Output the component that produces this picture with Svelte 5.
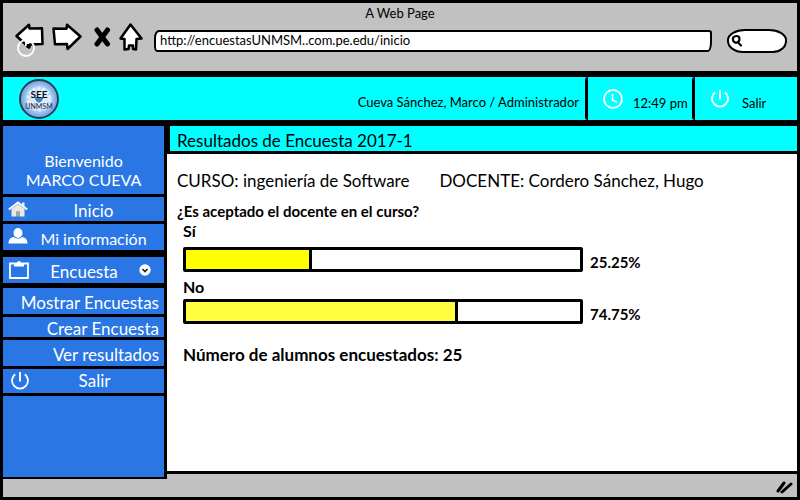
<script>
  const results = [
    { label: 'Sí', value: '25.25%', width: 32, color: '#ffff00' },
    { label: 'No', value: '74.75%', width: 69, color: '#ffff40' }
  ];
  const polls = ['Mostrar Encuestas', 'Crear Encuesta', 'Ver resultados'];
</script>

{#snippet power()}
  <svg class="power" viewBox="0 0 20 20" aria-hidden="true">
    <path d="M5.2 3.2a8 8 0 1 0 9.6 0M10 1v9.5" fill="none" stroke="#fff" stroke-width="1.9" />
  </svg>
{/snippet}

<div class="window">
  <header class="chrome">
    <div class="caption">A Web Page</div>
    <div class="toolbar">
      <button class="back" aria-label="Atrás">
        <svg width="30" height="30" viewBox="0 0 30 30">
          <path d="M1.5 13 14 1.8 14.5 5.5 27 5.200 27.500 21 15 21.500 14 24.500Z" fill="#fff" stroke="#000" stroke-width="2.500" stroke-linejoin="round" />
        </svg>
        <svg class="ring" width="18" height="18" viewBox="0 0 18 18">
          <circle cx="9" cy="9" r="8" fill="none" stroke="#fff" stroke-width="1.800" />
          <path d="M9 1v6" stroke="#fff" stroke-width="2" />
          <path d="M11.500 5v4" stroke="#000" stroke-width="3.500" />
        </svg>
      </button>
      <button class="forward" aria-label="Adelante">
        <svg width="30" height="30" viewBox="0 0 30 30">
          <path d="M1.500 5.500 14.500 5.800 15 1.800 28.500 13.500 15.500 26 15 21 3 21.300Z" fill="#fff" stroke="#000" stroke-width="2.500" stroke-linejoin="round" />
        </svg>
      </button>
      <button class="stop" aria-label="Detener">
        <svg width="18" height="22" viewBox="0 0 18 22">
          <path d="M4 3 14.500 17M14.500 3 4 17" fill="none" stroke="#000" stroke-width="5" stroke-linecap="round" />
        </svg>
      </button>
      <button class="home" aria-label="Inicio">
        <svg width="24" height="30" viewBox="0 0 24 30">
          <path d="M11.500 1.500 22.500 15.500 17.500 16 17 26.500 14 26 14 22.500 10 22.500 9.500 26 5.500 26.500 5.500 16 1.500 15.500Z" fill="#fff" stroke="#000" stroke-width="2.500" stroke-linejoin="round" />
        </svg>
      </button>
      <input class="address" type="text" aria-label="Dirección" value="http://encuestasUNMSM..com.pe.edu/inicio" />
      <div class="search">
        <svg width="14" height="14" viewBox="0 0 14 14" aria-hidden="true">
          <path d="M6.500 2C3.500 2 2.500 4 3 6S5.500 9 7 8.500 9.500 6.500 9.500 5 8.500 2 6.500 2M8 8.500 11 11.500" fill="none" stroke="#000" stroke-width="2.200" stroke-linecap="round" />
        </svg>
        <input type="search" aria-label="Buscar" />
      </div>
    </div>
  </header>

  <div class="topbar">
    <svg class="logo" width="42" height="42" viewBox="0 0 42 42" role="img" aria-label="SEE UNMSM">
      <defs>
        <radialGradient id="glow">
          <stop offset="0" stop-color="#f6faff" />
          <stop offset="0.5" stop-color="#cfe3fa" />
          <stop offset="1" stop-color="#5f9ee0" />
        </radialGradient>
      </defs>
      <circle cx="21" cy="22" r="19" fill="url(#glow)" stroke="#2d3b4a" stroke-width="1.800" />
      <circle cx="21" cy="22" r="11" fill="none" stroke="#fff" stroke-width="3" stroke-dasharray="3 2" opacity="0.600" />
      <path d="M16 20h10l-2 4-3 2-3-2z" fill="#3d86c6" />
      <text x="21" y="21" text-anchor="middle" font-size="10" font-weight="700" fill="#111">SEE</text>
      <text x="21" y="32" text-anchor="middle" font-size="7" fill="#223">UNMSM</text>
    </svg>
    <div class="user">Cueva Sánchez, Marco / Administrador</div>
    <div class="clock">
      <svg width="20" height="20" viewBox="0 0 20 20" aria-hidden="true">
        <circle cx="10" cy="10" r="9" fill="none" stroke="#fff" stroke-width="1.800" />
        <path d="M9.500 5v6l4.500 2.500" fill="none" stroke="#fff" stroke-width="1.500" />
      </svg>
      <span>12:49 pm</span>
    </div>
    <a class="exit" href="#salir">{@render power()}<span>Salir</span></a>
  </div>

  <div class="body">
    <nav class="sidebar">
      <div class="welcome">Bienvenido<br />MARCO CUEVA</div>
      <a class="item home-item" href="#inicio">
        <svg width="20" height="16" viewBox="0 0 20 16" aria-hidden="true">
          <path d="M3.500 8 10 3l6.500 5v7.500h-5v-5h-3v5h-5z" fill="#eee9df" />
          <path d="M14 1.500h2.500v4H14z" fill="#f4f1ea" />
          <path d="M.8 8.500 10 1.500l9.200 7" fill="none" stroke="#fff" stroke-width="2" />
          <path d="M8.500 10.500h3v5h-3z" fill="#a8a49c" />
        </svg>
        <span>Inicio</span>
      </a>
      <a class="item info-item" href="#informacion">
        <svg width="20" height="16" viewBox="0 0 20 16" aria-hidden="true">
          <ellipse cx="10" cy="5" rx="4.500" ry="5" fill="#fff" />
          <path d="M.5 15.500C.5 11 3 9.500 6 9c2 2.300 6 2.300 8 0 3 .5 5.500 2 5.500 6.500z" fill="#fff" />
        </svg>
        <span>Mi información</span>
      </a>
      <button class="item poll-item" aria-expanded="true">
        <svg width="20" height="18" viewBox="0 0 20 18" aria-hidden="true">
          <path d="M1 2.500h18v14.500H1z" fill="none" stroke="#fff" stroke-width="1.800" />
          <path d="M5 2h3a2 2 0 0 1 4 0h3v3.500H5z" fill="#fff" />
        </svg>
        <span>Encuesta</span>
        <svg class="chevron" width="12" height="12" viewBox="0 0 12 12" aria-hidden="true">
          <circle cx="6" cy="6" r="5.700" fill="#fff" />
          <path d="M3.500 5 6 7.500 8.500 5" fill="none" stroke="#222" stroke-width="1.600" />
        </svg>
      </button>
      {#each polls as poll, i}
        <a class="item sub" class:short={i === 1} href="#encuesta-{i}">{poll}</a>
      {/each}
      <a class="item exit-item" href="#salir">{@render power()}<span>Salir</span></a>
      <div class="rest"></div>
    </nav>

    <main>
      <h1>Resultados de Encuesta 2017-1</h1>
      <section>
        <div class="course">
          <span>CURSO: ingeniería de Software</span>
          <span>DOCENTE: Cordero Sánchez, Hugo</span>
        </div>
        <h2>¿Es aceptado el docente en el curso?</h2>
        {#each results as r}
          <div class="result">
            <div class="answer">{r.label}</div>
            <div class="row">
              <div class="bar" role="img" aria-label="{r.label}: {r.value}">
                <div class="fill" style="width: {r.width}%; background: {r.color}"></div>
              </div>
              <span class="percent">{r.value}</span>
            </div>
          </div>
        {/each}
        <p class="total">Número de alumnos encuestados: 25</p>
      </section>
    </main>
  </div>

  <footer>
    <svg width="18" height="14" viewBox="0 0 18 14" aria-hidden="true">
      <path d="M2 11 8 3M6 12 15 4" fill="none" stroke="#000" stroke-width="3" stroke-linecap="round" />
    </svg>
  </footer>
</div>

<style>
  :global(body) { margin: 0; }
  .window, .window * { box-sizing: border-box; }
  .window {
    display: flex;
    flex-direction: column;
    min-height: 100vh;
    border: 3px solid #000;
    background: #c1c1c1;
    color: #000;
    font-family: Lato, "Open Sans", sans-serif;
    font-size: 17px;
    line-height: 20px;
  }
  button, input { font: inherit; }
  button { padding: 0; border: 0; background: none; color: inherit; }
  a { color: inherit; text-decoration: none; }
  svg { display: block; flex: none; }
  .power { width: 20px; height: 20px; }

  .chrome { height: 74px; border-bottom: 6px solid #000; }
  .caption { text-align: center; font-size: 13px; }
  .toolbar { display: flex; align-items: center; height: 30px; padding: 0 10px 0 12px; }
  .back { position: relative; }
  .ring { position: absolute; left: 2px; top: 16px; }
  .forward { margin-left: 7px; }
  .stop { margin-left: 11px; }
  .home { margin-left: 8px; }
  .address {
    flex: 1;
    min-width: 0;
    height: 22px;
    margin: 6px 0 0 11px;
    padding: 0 4px 2px;
    border: 2px solid #000;
    border-radius: 5px 3px 4px 3px / 8px 3px 10px 6px;
    background: #fff;
    font-size: 13px;
    outline: 0;
  }
  .search {
    display: flex;
    align-items: center;
    width: 60px;
    height: 24px;
    margin: 5px 0 0 15px;
    padding-left: 1px;
    border: 2px solid #000;
    border-radius: 18px 18px 14px 16px / 11px 11px 12px 12px;
    background: #fff;
  }
  .search input { width: 100%; min-width: 0; border: 0; padding: 0; background: none; outline: 0; }

  .topbar {
    display: flex;
    height: 49px;
    border-bottom: 6px solid #000;
    background: #0ff;
    font-size: 13px;
  }
  .logo { margin-left: 15px; }
  .user { flex: 1; padding: 15px 6px 0 0; text-align: right; }
  .clock, .exit {
    display: flex;
    gap: 10px;
    padding: 12px 0 0 15px;
    border-left: 3px solid #000;
    border-radius: 3px;
  }
  .clock { width: 107px; }
  .exit { width: 105px; gap: 12px; }
  .clock span, .exit span { padding-top: 4px; }

  .body { display: flex; flex: 1; background: #fff; }
  .sidebar {
    position: relative;
    display: flex;
    flex-direction: column;
    flex: none;
    width: 164px;
    margin-bottom: -8px;
    border-right: 3px solid #000;
    border-bottom: 2px solid #000;
    background: #2976e4;
    color: #fff;
  }
  .welcome {
    height: 71px;
    padding-top: 25px;
    border-bottom: 3px solid #000;
    text-align: center;
    font-size: 16px;
    line-height: 19px;
  }
  .item {
    display: flex;
    align-items: center;
    height: 27px;
    padding: 0 5px;
    border-bottom: 3px solid #000;
  }
  .item span { flex: 1; text-align: center; padding-top: 4px; }
  .info-item { height: 33px; padding-bottom: 2px; border-bottom-width: 7px; font-size: 16px; }
  .info-item span { padding-top: 6px; }
  .poll-item { height: 31px; padding: 0 13px 0 6px; border-bottom-width: 5px; }
  .sub { height: 29px; justify-content: flex-end; padding-top: 4px; }
  .short { height: 23px; }
  .exit-item { padding-left: 7px; }
  .exit-item span { padding-top: 0; }
  .rest { flex: 1; border-top: 0; }

  main { flex: 1; min-width: 0; display: flex; flex-direction: column; }
  h1, h2, p { margin: 0; }
  h1 {
    height: 28px;
    padding: 5px 7px 0;
    border-left: 3px solid #000;
    border-bottom: 3px solid #000;
    background: #0ff;
    font-size: 17px;
    font-weight: 400;
  }
  section { padding: 17px 10px; }
  .course { display: flex; flex-wrap: wrap; gap: 0 30px; }
  h2 { margin-top: 10px; font-size: 15px; font-weight: 700; }
  .result { padding: 0 6px; margin-bottom: 5px; }
  .answer { font-weight: 700; font-size: 16px; }
  .row { display: flex; align-items: center; gap: 7px; margin-top: 6px; }
  .result + .result .row { margin-top: 2px; }
  .bar {
    flex: 0 1 400px;
    height: 25px;
    border: 3px solid #000;
    border-radius: 2px;
  }
  .fill { height: 100%; border-right: 3px solid #000; }
  .percent { padding-top: 4px; font-size: 15px; font-weight: 700; }
  .total { padding: 16px 6px 0; font-weight: 700; }

  footer {
    display: flex;
    justify-content: flex-end;
    height: 26px;
    padding: 6px 3px 0;
    border-top: 3px solid #000;
  }
</style>
